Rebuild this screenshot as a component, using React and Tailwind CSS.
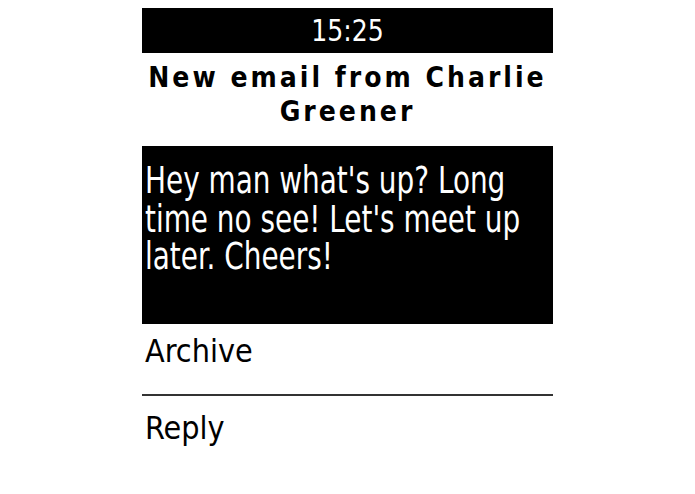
import React from "react";

const EmailNotification = () => {
  return (
    <div className="w-full h-[494px] bg-white font-['DejaVu_Sans_Condensed','DejaVu_Sans',sans-serif]">
      <div className="mx-auto w-[411px] pt-2">
        <div className="h-[45px] bg-black text-white flex items-center justify-center">
          <span className="text-[28px] leading-none scale-y-110">15:25</span>
        </div>
        <div className="h-[93px] pb-[9px] flex flex-col items-center justify-center text-[28px] font-bold leading-[34px] tracking-[3px] text-center">
          <div>New email from Charlie</div>
          <div>Greener</div>
        </div>
        <div className="h-[178px] bg-black text-white pl-[3px] pt-[16px]">
          <p className="text-[31px] leading-[31.5px] scale-y-120 origin-top">
            Hey man what's up? Long time no see! Let's meet up later. Cheers!
          </p>
        </div>
        <div className="h-[72px] border-b-2 border-[#333] px-[3px] pt-[11px] text-[32px] leading-none">
          Archive
        </div>
        <div className="px-[3px] pt-[16px] text-[32px] leading-none">
          Reply
        </div>
      </div>
    </div>
  );
};

export default EmailNotification;
